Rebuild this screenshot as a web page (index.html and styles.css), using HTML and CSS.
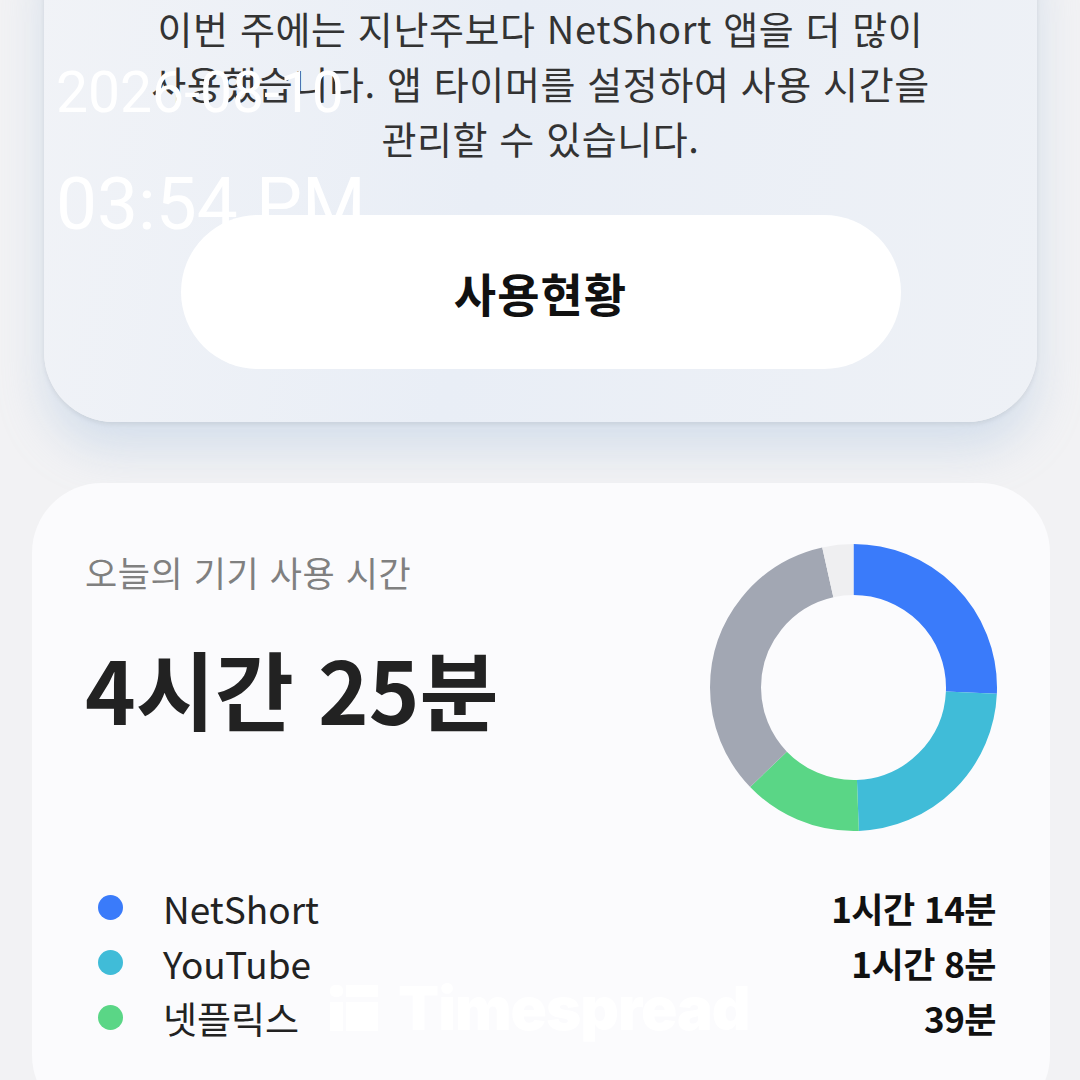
FILE: index.html
```html
<!DOCTYPE html>
<html lang="ko">
<head>
    <meta charset="UTF-8">
    <meta name="viewport" content="width=device-width, initial-scale=1.0">
    <title>사용현황</title>
    <link rel="stylesheet" href="styles.css">
</head>
<body>
    <!-- 주간 요약 카드 -->
    <section class="summary">
        <p class="summary-text">이번 주에는 지난주보다 NetShort 앱을 더 많이<br>사용했습니다. 앱 타이머를 설정하여 사용 시간을<br>관리할 수 있습니다.</p>
        <a href="#" class="pill-button">사용현황</a>
    </section>

    <!-- 오늘의 사용 시간 카드 -->
    <section class="usage">
        <div class="usage-top">
            <div class="usage-info">
                <h2 class="usage-title">오늘의 기기 사용 시간</h2>
                <p class="usage-total">4시간 25분</p>
            </div>
            <svg class="donut" viewBox="0 0 289 289" width="289" height="289">
                <g transform="rotate(-90 144.5 144.5)" fill="none" stroke-width="51">
                    <circle cx="144.5" cy="144.5" r="118" pathLength="100" stroke="#3a7bfa" stroke-dasharray="25.7 74.3" stroke-dashoffset="0"/>
                    <circle cx="144.5" cy="144.5" r="118" pathLength="100" stroke="#40bcd8" stroke-dasharray="23.7 76.3" stroke-dashoffset="-25.7"/>
                    <circle cx="144.5" cy="144.5" r="118" pathLength="100" stroke="#5ad686" stroke-dasharray="13.4 86.6" stroke-dashoffset="-49.4"/>
                    <circle cx="144.5" cy="144.5" r="118" pathLength="100" stroke="#a2a7b3" stroke-dasharray="33.7 66.3" stroke-dashoffset="-62.8"/>
                    <circle cx="144.5" cy="144.5" r="118" pathLength="100" stroke="#efeff1" stroke-dasharray="3.5 96.5" stroke-dashoffset="-96.5"/>
                </g>
            </svg>
        </div>

        <ul class="legend">
            <li><span class="dot dot-blue"></span><span class="app">NetShort</span><span class="time">1시간 14분</span></li>
            <li><span class="dot dot-cyan"></span><span class="app">YouTube</span><span class="time">1시간 8분</span></li>
            <li><span class="dot dot-green"></span><span class="app">넷플릭스</span><span class="time">39분</span></li>
        </ul>
    </section>

    <!-- 촬영 시각 오버레이 -->
    <div class="stamp">
        <div class="stamp-date">2026-08-10</div>
        <div class="stamp-time">03:54 PM</div>
    </div>

    <!-- 워터마크 -->
    <div class="watermark">
        <svg class="watermark-logo" viewBox="0 0 48 46" width="48" height="46">
            <rect x="0" y="0" width="13" height="12" rx="5"/>
            <rect x="16" y="0" width="32" height="12"/>
            <rect x="0" y="17" width="13" height="29"/>
            <rect x="16" y="17" width="32" height="29"/>
        </svg>
        <span>Timespread</span>
    </div>
</body>
</html>
```

FILE: styles.css
```css
* {
    margin: 0;
    padding: 0;
    box-sizing: border-box;
}

body {
    font-family: "Noto Sans CJK KR", sans-serif;
    background-color: #f2f2f4;
    color: #222;
    height: 1080px;
    overflow: hidden;
    position: relative;
}

/* 요약 카드 */
.summary {
    margin: -100px 43px 0 44px;
    padding: 100px 0 53px;
    border-radius: 70px;
    background: linear-gradient(100deg, #f1f3f7 0%, #e9eef6 45%, #eef1f6 100%);
    box-shadow: 0 2px 5px rgba(0, 0, 0, 0.08), 0 28px 45px rgba(160, 190, 220, 0.35);
    text-align: center;
}

.summary-text {
    font-size: 38px;
    line-height: 55px;
    letter-spacing: 0.6px;
    color: #333;
}

.pill-button {
    display: flex;
    align-items: center;
    justify-content: center;
    width: 720px;
    height: 154px;
    margin: 50px auto 0;
    border-radius: 77px;
    background-color: #fff;
    color: #111;
    font-size: 46px;
    font-weight: bold;
    letter-spacing: 1px;
    text-decoration: none;
}

/* 사용 시간 카드 */
.usage {
    margin: 61px 30px 0 32px;
    padding: 60px 52px 80px 53px;
    border-radius: 70px;
    background-color: #fbfbfd;
}

.usage-top {
    display: flex;
    justify-content: space-between;
}

.usage-info {
    padding-top: 9px;
}

.usage-title {
    font-size: 35px;
    line-height: 40px;
    letter-spacing: 0.6px;
    font-weight: normal;
    color: #808080;
}

.usage-total {
    margin-top: 51px;
    font-size: 86px;
    line-height: 90px;
    font-weight: bold;
    color: #222;
}

.donut {
    display: block;
}

.legend {
    list-style: none;
    margin-top: 48px;
}

.legend li {
    display: flex;
    align-items: center;
    height: 55px;
    padding: 0 2px 0 13px;
}

.dot {
    width: 25px;
    height: 25px;
    border-radius: 50%;
    margin-right: 40px;
}

.dot-blue { background-color: #3a7bfa; }
.dot-cyan { background-color: #40bcd8; }
.dot-green { background-color: #5ad686; }

.app {
    flex: 1;
    font-size: 37px;
    color: #222;
}

.time {
    font-size: 35px;
    font-weight: bold;
    letter-spacing: -0.5px;
    color: #111;
}

/* 촬영 시각 오버레이 */
.stamp {
    position: absolute;
    top: 0;
    left: 56px;
    color: #fff;
    font-family: Roboto, sans-serif;
}

.stamp-date {
    position: absolute;
    top: 62px;
    font-size: 57px;
    line-height: 62px;
    white-space: nowrap;
}

.stamp-time {
    position: absolute;
    top: 165px;
    font-size: 73px;
    line-height: 78px;
    white-space: nowrap;
}

/* 워터마크 */
.watermark {
    position: absolute;
    left: 330px;
    top: 972px;
    display: flex;
    align-items: center;
    gap: 20px;
    color: rgba(255, 255, 255, 0.92);
    font-family: Inter, sans-serif;
    font-size: 60px;
    font-weight: 900;
    letter-spacing: -1px;
}

.watermark-logo {
    fill: rgba(255, 255, 255, 0.92);
}
```
